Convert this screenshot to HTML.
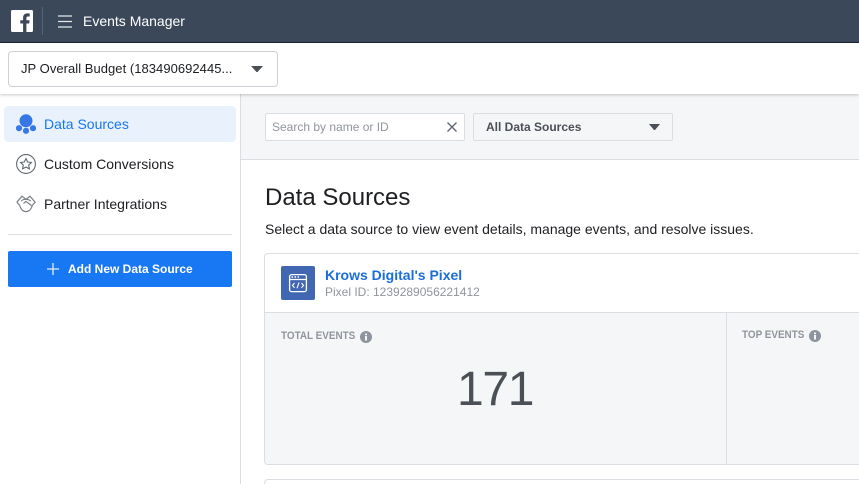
<!DOCTYPE html>
<html><head><meta charset="utf-8">
<style>
html,body{margin:0;padding:0;width:859px;height:484px;overflow:hidden;background:#fff;font-family:"Liberation Sans",sans-serif}
#r{position:relative;width:859px;height:484px;overflow:hidden}
.a{position:absolute;white-space:nowrap}
</style></head><body><div id="r">
<div class="a" style="left:0;top:0;width:859px;height:42px;background:#3b4859"></div>
<div class="a" style="left:0;top:42px;width:859px;height:1px;background:#1c2530"></div>
<svg class="a" style="left:11px;top:10px" width="22" height="22" viewBox="0 0 22 22"><rect width="22" height="22" rx="1.5" fill="#fff"/><path d="M15.4 22V13.5H18.2L18.6 10.2H15.4V8.1C15.4 7.1 15.7 6.5 17.1 6.5H18.7V3.5C18.4 3.5 17.4 3.4 16.3 3.4C13.8 3.4 12.1 4.9 12.1 7.7V10.2H9.3V13.5H12.1V22Z" fill="#3b4859"/></svg>
<div class="a" style="left:42px;top:7px;width:1px;height:28px;background:#56637a"></div>
<svg class="a" style="left:58px;top:15px" width="14" height="13"><path d="M0 1H14M0 6.5H14M0 12H14" stroke="#e4e7eb" stroke-width="1.3"/></svg>
<div class="a" style="left:83px;top:13px;font-size:14px;line-height:16px;color:#fff">Events Manager</div>

<div class="a" style="left:0;top:43px;width:859px;height:51px;background:#fff;box-shadow:0 1px 3px rgba(0,0,0,.22);z-index:3"></div>
<div class="a" style="left:8px;top:51px;width:268px;height:34px;border:1px solid #ccd0d5;border-radius:4px;background:#fff;z-index:4"></div>
<div class="a" style="left:21px;top:60px;font-size:13px;letter-spacing:.04px;line-height:17px;color:#1c1e21;z-index:4">JP Overall Budget (183490692445...</div>
<svg class="a" style="left:251px;top:66px;z-index:4" width="12" height="6"><path d="M0 0H12L6.5 6H5.5Z" fill="#4b4f56"/></svg>

<div class="a" style="left:240px;top:94px;width:1px;height:390px;background:#dadde1"></div>
<div class="a" style="left:241px;top:94px;width:618px;height:65px;background:#f5f6f7"></div>
<div class="a" style="left:241px;top:159px;width:618px;height:1px;background:#dadde1"></div>

<div class="a" style="left:4px;top:106px;width:232px;height:36px;background:#e9f1fd;border-radius:4px"></div>
<svg class="a" style="left:16px;top:114px" width="20" height="20"><circle cx="10" cy="6.8" r="6.5" fill="#3578e5"/><circle cx="3" cy="14.2" r="3.1" fill="#3578e5"/><circle cx="10" cy="16.8" r="3.1" fill="#3578e5"/><circle cx="17" cy="14.2" r="3.1" fill="#3578e5"/></svg>
<div class="a" style="left:44px;top:116px;font-size:14px;line-height:17px;color:#1877f2">Data Sources</div>

<svg class="a" style="left:16px;top:154px" width="20" height="20" fill="none" stroke="#606770" stroke-width="1.1"><circle cx="10" cy="10" r="9.4"/><path d="M10 4.6L11.7 8L15.4 8.5L12.7 11.1L13.4 14.8L10 13L6.6 14.8L7.3 11.1L4.6 8.5L8.3 8Z"/></svg>
<div class="a" style="left:44px;top:156px;font-size:14px;line-height:17px;color:#1c1e21">Custom Conversions</div>

<svg class="a" style="left:16px;top:195px" width="20" height="18" fill="none" stroke="#7b8087" stroke-width="1.2"><path d="M.8 7.2L6 1.2L10 4.4L14 1.2L19.2 7.2L16.4 10.2M.8 7.2L3.6 10.2"/><path d="M3.6 10.2C4.6 14 7 16.6 10 16.6C13 16.6 15.4 14 16.4 10.2"/><path d="M5.2 6.2C7 3.8 12 3.6 14.8 6.2"/><path d="M7.5 8.4L10 6.4L15.5 10.6"/></svg>
<div class="a" style="left:44px;top:196px;font-size:14px;line-height:17px;color:#1c1e21">Partner Integrations</div>

<div class="a" style="left:8px;top:234px;width:224px;height:1px;background:#dadde1"></div>
<div class="a" style="left:8px;top:251px;width:224px;height:36px;background:#1877f2;border-radius:2px"></div>
<svg class="a" style="left:47px;top:263px" width="12" height="12"><path d="M6 0V12M0 6H12" stroke="#e4effd" stroke-width="1.3"/></svg>
<div class="a" style="left:68px;top:262px;font-size:12px;line-height:14px;font-weight:bold;color:#fff">Add New Data Source</div>

<div class="a" style="left:265px;top:113px;width:198px;height:26px;background:#fff;border:1px solid #dadde1;border-radius:2px"></div>
<div class="a" style="left:272px;top:120px;font-size:12px;line-height:15px;color:#90949c">Search by name or ID</div>
<svg class="a" style="left:447px;top:122px" width="10" height="10"><path d="M.5 .5L9.5 9.5M9.5 .5L.5 9.5" stroke="#606770" stroke-width="1.4"/></svg>
<div class="a" style="left:473px;top:113px;width:198px;height:26px;background:#f5f6f7;border:1px solid #dadde1;border-radius:2px"></div>
<div class="a" style="left:486px;top:120px;font-size:12px;line-height:15px;font-weight:bold;color:#4b4f56">All Data Sources</div>
<svg class="a" style="left:649px;top:124px" width="11" height="6"><path d="M0 0H11L6 6H5Z" fill="#4b4f56"/></svg>

<div class="a" style="left:265px;top:184px;font-size:24px;line-height:28px;color:#1c1e21">Data Sources</div>
<div class="a" style="left:265px;top:220px;font-size:14px;line-height:18px;color:#1c1e21">Select a data source to view event details, manage events, and resolve issues.</div>

<div class="a" style="left:264px;top:253px;width:620px;height:210px;border:1px solid #dadde1;border-radius:4px;background:#fff"></div>
<div class="a" style="left:265px;top:312px;width:620px;height:152px;background:#f5f6f7;border-top:1px solid #dadde1;border-radius:0 0 0 4px;box-sizing:border-box"></div>
<div class="a" style="left:726px;top:313px;width:1px;height:151px;background:#dadde1"></div>
<svg class="a" style="left:281px;top:266px" width="34" height="34" fill="none" stroke="#fff" stroke-width="1.3"><rect width="34" height="34" rx="2" fill="#4267b2" stroke="none"/><rect x="8.6" y="8.6" width="16.8" height="17" rx="2"/><path d="M8.6 13.5H25.4"/><path d="M10.5 11H12M13.5 11H15M16.5 11H18" stroke-width="1.4"/><path d="M13.5 17L11.5 19.4L13.5 21.8M20.5 17L22.5 19.4L20.5 21.8M18 16.5L16 22.3" stroke-width="1.1"/></svg>
<div class="a" style="left:325px;top:267px;font-size:14px;line-height:17px;font-weight:bold;color:#1a6ed8">Krows Digital's Pixel</div>
<div class="a" style="left:325px;top:285px;font-size:12px;line-height:14px;color:#90949c">Pixel ID: 1239289056221412</div>

<div class="a" style="left:281px;top:330px;font-size:11px;line-height:13px;font-weight:bold;color:#90949c;transform-origin:0 50%;transform:scaleX(.9)">TOTAL EVENTS</div>
<svg class="a" style="left:360px;top:331px" width="12" height="12"><circle cx="6" cy="6" r="6" fill="#8d949e"/><rect x="5" y="5" width="2" height="4.5" fill="#f5f6f7"/><rect x="5" y="2.5" width="2" height="1.7" fill="#f5f6f7"/></svg>
<div class="a" style="left:457px;top:362px;font-size:48px;line-height:56px;letter-spacing:-1.3px;color:#4b4f56">171</div>

<div class="a" style="left:742px;top:329px;font-size:11px;line-height:13px;font-weight:bold;color:#90949c;transform-origin:0 50%;transform:scaleX(.9)">TOP EVENTS</div>
<svg class="a" style="left:809px;top:330px" width="12" height="12"><circle cx="6" cy="6" r="6" fill="#8d949e"/><rect x="5" y="5" width="2" height="4.5" fill="#f5f6f7"/><rect x="5" y="2.5" width="2" height="1.7" fill="#f5f6f7"/></svg>

<div class="a" style="left:264px;top:479px;width:620px;height:20px;border:1px solid #dadde1;border-radius:4px;background:#fff"></div>
</div></body></html>
